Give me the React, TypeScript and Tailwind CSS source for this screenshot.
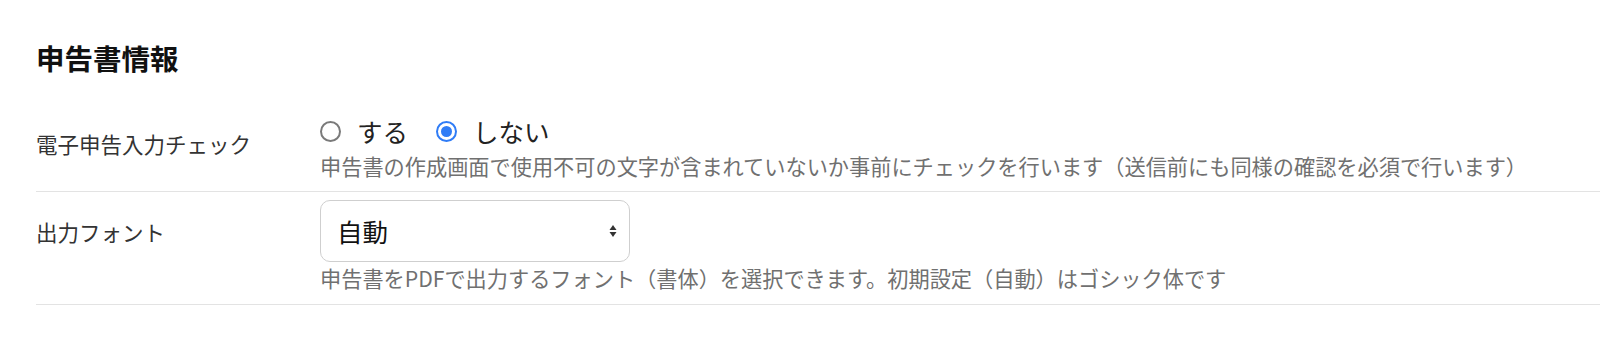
import React from "react";

const font = { fontFamily: '"Noto Sans CJK JP", "Noto Sans", sans-serif' };

function Radio({ checked }: { checked: boolean }) {
  return checked ? (
    <span className="inline-flex h-[21px] w-[21px] items-center justify-center rounded-full border-[2.5px] border-[#2f7cf6] bg-white">
      <span className="h-[11px] w-[11px] rounded-full bg-[#2f7cf6]" />
    </span>
  ) : (
    <span className="inline-block h-[21px] w-[21px] rounded-full border-2 border-[#7a7a7a] bg-white" />
  );
}

export default function App() {
  return (
    <div className="w-[1600px] h-[338px] bg-white pl-[36px]" style={font}>
      <h2 className="pt-[39px] text-[28.5px] leading-[38px] font-bold text-[#111]">申告書情報</h2>
      <div className="mt-[37px] flex border-b border-[#e3e3e3] pb-[11px]">
        <div className="w-[284px] shrink-0 pt-[16px] text-[21.5px] leading-[28px] text-[#333]">電子申告入力チェック</div>
        <div className="flex flex-col">
          <div className="flex h-[34px] items-center text-[25.5px] text-[#222]">
            <label className="flex items-center">
              <Radio checked={false} />
              <span className="ml-[16px]">する</span>
            </label>
            <label className="ml-[28px] flex items-center">
              <Radio checked={true} />
              <span className="ml-[16px]">しない</span>
            </label>
          </div>
          <div className="mt-[4px] text-[21.2px] leading-[28px] text-[#707070]">
            申告書の作成画面で使用不可の文字が含まれていないか事前にチェックを行います（送信前にも同様の確認を必須で行います）
          </div>
        </div>
      </div>
      <div className="flex border-b border-[#e3e3e3] pt-[8px] pb-[12px]">
        <div className="w-[284px] shrink-0 pt-[18px] text-[21.5px] leading-[28px] text-[#333]">出力フォント</div>
        <div className="flex flex-col">
          <div className="relative flex h-[62px] w-[310px] items-center rounded-[10px] border border-[#cfcfcf] bg-white pl-[16px] text-[25.5px] text-[#111]">
            <span>自動</span>
            <svg className="absolute right-[12px] top-1/2 -translate-y-1/2" width="8" height="14" viewBox="0 0 8 14">
              <path d="M4 1 L7.5 6 L0.5 6 Z" fill="#333" />
              <path d="M4 13 L7.5 8 L0.5 8 Z" fill="#333" />
            </svg>
          </div>
          <div className="mt-[2px] text-[21.2px] leading-[28px] text-[#707070]">
            申告書をPDFで出力するフォント（書体）を選択できます。初期設定（自動）はゴシック体です
          </div>
        </div>
      </div>
    </div>
  );
}
